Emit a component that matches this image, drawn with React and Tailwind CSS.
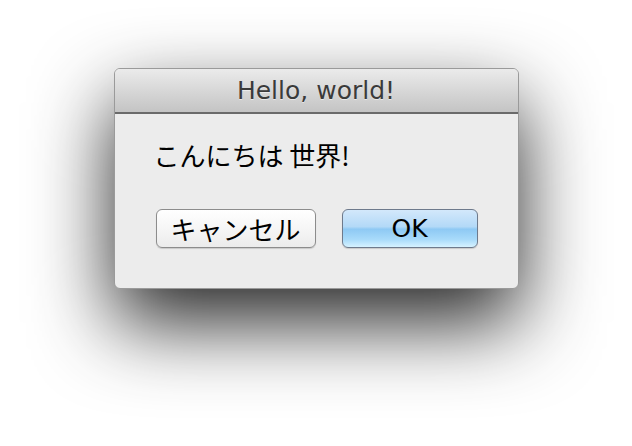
export default function App() {
  return (
    <div className="w-[632px] h-[446px] bg-white overflow-hidden pt-[68px]">
      <div className="mx-auto w-[405px] h-[221px] rounded-[6px] border border-[#9a9a9a] bg-[#ececec] shadow-[0_34px_80px_rgba(0,0,0,0.85)] overflow-hidden flex flex-col">
        <div className="h-[45px] shrink-0 flex items-center justify-center border-b-2 border-[#6a6a6a] bg-gradient-to-b from-[#ebebeb] to-[#c4c4c4]">
          <span className="text-[25px] leading-none text-[#3a3a3a] font-['DejaVu_Sans',sans-serif] [text-shadow:0_1px_0_rgba(255,255,255,0.5)]">
            Hello, world!
          </span>
        </div>
        <div className="flex-1 pl-[41px] pt-[25px]">
          <p className="-ml-[2px] text-[26px] leading-[32px] text-black font-['Noto_Sans_CJK_JP',sans-serif]">
            こんにちは 世界!
          </p>
          <div className="mt-[38px] flex gap-[26px]">
            <button className="w-[160px] h-[39px] rounded-[6px] border border-[#8c8c8c] bg-gradient-to-b from-white via-[#f6f6f6] to-[#ebebeb] shadow-[0_1px_1px_rgba(0,0,0,0.15)] text-[26px] leading-none text-black font-['Noto_Sans_CJK_JP',sans-serif]">
              キャンセル
            </button>
            <button className="w-[136px] h-[39px] rounded-[6px] border border-[#6e7a8c] bg-[linear-gradient(to_bottom,#d3e8fb_0%,#b3d9f7_45%,#8ec9f4_52%,#a9dbfa_80%,#d6f2ff_100%)] shadow-[0_1px_1px_rgba(0,0,0,0.15)] text-[25px] leading-none text-black font-['DejaVu_Sans',sans-serif]">
              OK
            </button>
          </div>
        </div>
      </div>
    </div>
  )
}
